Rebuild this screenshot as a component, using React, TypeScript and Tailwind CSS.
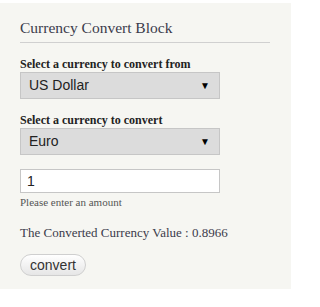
import React from "react";

const serif = "font-['Liberation_Serif',serif]";
const sans = "font-['Liberation_Sans',Arial,sans-serif]";

// ── Fake select box ──────────────────────────

const SelectBox: React.FC<{ value: string }> = ({ value }) => (
  <div
    className={`flex items-center justify-between w-[200px] h-[27px] pl-[8px] pr-[9px] bg-[#dcdcdc] border border-[#c6c6c6] text-[14px] text-[#222] ${sans}`}
  >
    <span>{value}</span>
    <span className="text-[10px] text-black leading-none">▼</span>
  </div>
);

export default function App() {
  const [amount, setAmount] = React.useState("1");

  return (
    <div className="w-[297px] h-[307px] bg-white pt-[3px]">
      <div className={`w-[291px] h-[286px] bg-[#f6f6f2] pl-[20px] pr-[21px] pt-[15px] ${serif} text-[#333]`}>
        {/* Title */}
        <h2 className="text-[15.5px] leading-[20px] text-[#3b3b4b] pb-[4px] border-b border-[#d0d0d0]">
          Currency Convert Block
        </h2>

        {/* From */}
        <div className="mt-[14px]">
          <label className="block text-[12px] leading-[15px] font-bold text-[#222]">
            Select a currency to convert from
          </label>
          <SelectBox value="US Dollar" />
        </div>

        {/* To */}
        <div className="mt-[14px]">
          <label className="block text-[12px] leading-[15px] font-bold text-[#222]">
            Select a currency to convert
          </label>
          <SelectBox value="Euro" />
        </div>

        {/* Amount */}
        <div className="mt-[14px]">
          <input
            value={amount}
            onChange={(e) => setAmount(e.target.value)}
            className={`block w-[200px] h-[24px] px-[6px] bg-white border border-[#c6c6c6] text-[14px] text-[#222] outline-none ${sans}`}
          />
          <div className="mt-[3px] text-[11px] leading-[13px] text-[#555]">Please enter an amount</div>
        </div>

        <p className="mt-[15px] text-[13px] leading-[17px] text-[#3b3b4b]">
          The Converted Currency Value : 0.8966
        </p>

        <button
          className={`mt-[13px] w-[66px] h-[22px] rounded-full border border-[#cfcfcf] bg-gradient-to-b from-white to-[#e6e6e6] text-[14px] leading-none text-[#333] ${sans}`}
        >
          convert
        </button>
      </div>
    </div>
  );
}
